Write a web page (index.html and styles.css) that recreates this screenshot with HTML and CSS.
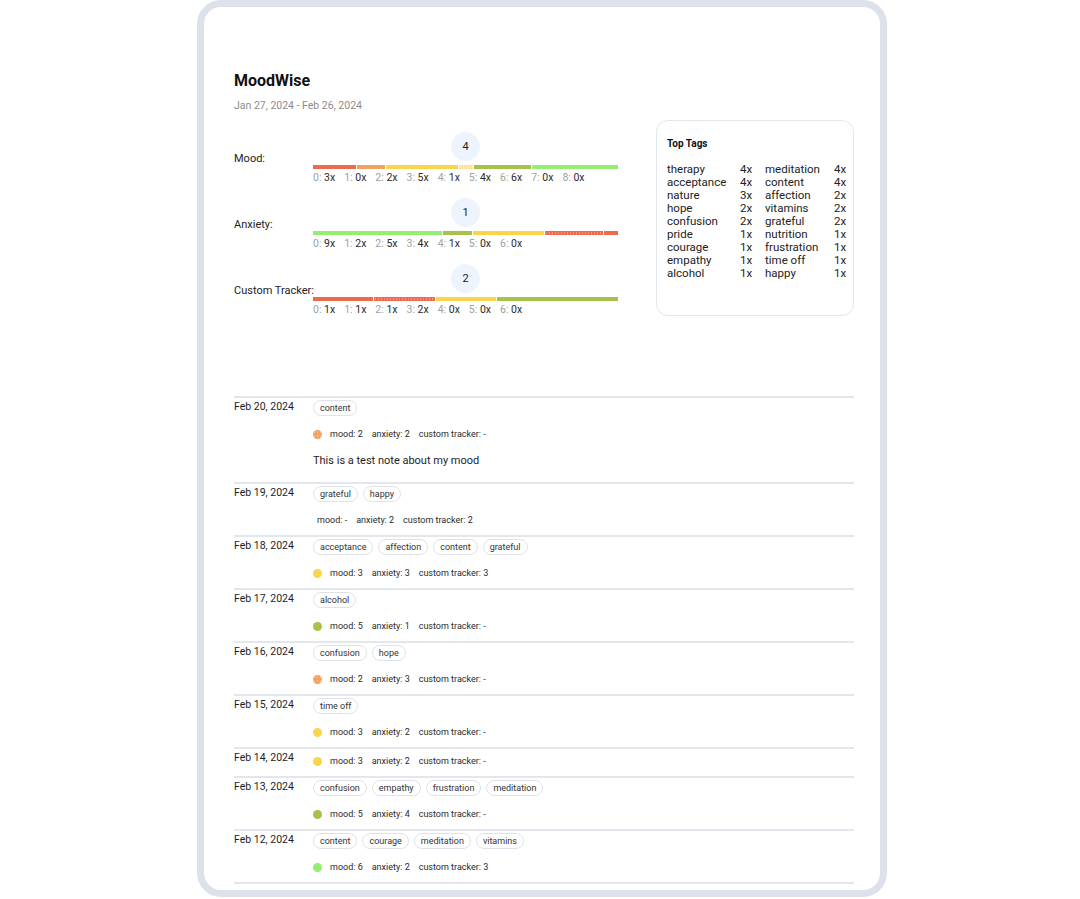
FILE: index.html
```html
<!DOCTYPE html>
<html lang="en">
<head>
    <meta charset="UTF-8">
    <meta name="viewport" content="width=device-width, initial-scale=1.0">
    <title>MoodWise</title>
    <link rel="stylesheet" href="styles.css">
</head>
<body>
    <div class="device">
        <h1 class="app-title">MoodWise</h1>
        <p class="range">Jan 27, 2024 - Feb 26, 2024</p>

        <section class="stats">
            <div class="trackers">
                <!-- Mood -->
                <div class="tracker">
                    <div class="tracker-label">Mood:</div>
                    <div class="tracker-body">
                        <div class="avg">4</div>
                        <div class="bar">
                            <span class="seg red" style="flex-grow: 3"></span>
                            <span class="seg orange" style="flex-grow: 2"></span>
                            <span class="seg yellow" style="flex-grow: 5"></span>
                            <span class="seg pale dots" style="flex-grow: 1"></span>
                            <span class="seg olive" style="flex-grow: 4"></span>
                            <span class="seg green" style="flex-grow: 6"></span>
                        </div>
                        <div class="counts">
                            <span><i>0:</i> 3x</span>
                            <span><i>1:</i> 0x</span>
                            <span><i>2:</i> 2x</span>
                            <span><i>3:</i> 5x</span>
                            <span><i>4:</i> 1x</span>
                            <span><i>5:</i> 4x</span>
                            <span><i>6:</i> 6x</span>
                            <span><i>7:</i> 0x</span>
                            <span><i>8:</i> 0x</span>
                        </div>
                    </div>
                </div>

                <!-- Anxiety -->
                <div class="tracker">
                    <div class="tracker-label">Anxiety:</div>
                    <div class="tracker-body">
                        <div class="avg">1</div>
                        <div class="bar">
                            <span class="seg green" style="flex-grow: 9"></span>
                            <span class="seg olive" style="flex-grow: 2"></span>
                            <span class="seg yellow" style="flex-grow: 5"></span>
                            <span class="seg red dots" style="flex-grow: 4"></span>
                            <span class="seg red" style="flex-grow: 1"></span>
                        </div>
                        <div class="counts">
                            <span><i>0:</i> 9x</span>
                            <span><i>1:</i> 2x</span>
                            <span><i>2:</i> 5x</span>
                            <span><i>3:</i> 4x</span>
                            <span><i>4:</i> 1x</span>
                            <span><i>5:</i> 0x</span>
                            <span><i>6:</i> 0x</span>
                        </div>
                    </div>
                </div>

                <!-- Custom tracker -->
                <div class="tracker">
                    <div class="tracker-label">Custom Tracker:</div>
                    <div class="tracker-body">
                        <div class="avg">2</div>
                        <div class="bar">
                            <span class="seg red" style="flex-grow: 1"></span>
                            <span class="seg red dots" style="flex-grow: 1"></span>
                            <span class="seg yellow" style="flex-grow: 1"></span>
                            <span class="seg olive" style="flex-grow: 2"></span>
                        </div>
                        <div class="counts">
                            <span><i>0:</i> 1x</span>
                            <span><i>1:</i> 1x</span>
                            <span><i>2:</i> 1x</span>
                            <span><i>3:</i> 2x</span>
                            <span><i>4:</i> 0x</span>
                            <span><i>5:</i> 0x</span>
                            <span><i>6:</i> 0x</span>
                        </div>
                    </div>
                </div>
            </div>

            <aside class="top-tags">
                <h3>Top Tags</h3>
                <div class="tag-grid">
                    <span>therapy</span><span>4x</span><span>meditation</span><span>4x</span>
                    <span>acceptance</span><span>4x</span><span>content</span><span>4x</span>
                    <span>nature</span><span>3x</span><span>affection</span><span>2x</span>
                    <span>hope</span><span>2x</span><span>vitamins</span><span>2x</span>
                    <span>confusion</span><span>2x</span><span>grateful</span><span>2x</span>
                    <span>pride</span><span>1x</span><span>nutrition</span><span>1x</span>
                    <span>courage</span><span>1x</span><span>frustration</span><span>1x</span>
                    <span>empathy</span><span>1x</span><span>time off</span><span>1x</span>
                    <span>alcohol</span><span>1x</span><span>happy</span><span>1x</span>
                </div>
            </aside>
        </section>

        <ul class="entries">
            <li class="entry">
                <div class="entry-date">Feb 20, 2024</div>
                <div class="entry-body">
                    <div class="tags"><span class="tag">content</span></div>
                    <div class="levels"><span class="dot orange dots"></span><span>mood: 2</span><span>anxiety: 2</span><span>custom tracker: -</span></div>
                    <p class="note">This is a test note about my mood</p>
                </div>
            </li>
            <li class="entry">
                <div class="entry-date">Feb 19, 2024</div>
                <div class="entry-body">
                    <div class="tags"><span class="tag">grateful</span><span class="tag">happy</span></div>
                    <div class="levels"><span>mood: -</span><span>anxiety: 2</span><span>custom tracker: 2</span></div>
                </div>
            </li>
            <li class="entry">
                <div class="entry-date">Feb 18, 2024</div>
                <div class="entry-body">
                    <div class="tags"><span class="tag">acceptance</span><span class="tag">affection</span><span class="tag">content</span><span class="tag">grateful</span></div>
                    <div class="levels"><span class="dot yellow"></span><span>mood: 3</span><span>anxiety: 3</span><span>custom tracker: 3</span></div>
                </div>
            </li>
            <li class="entry">
                <div class="entry-date">Feb 17, 2024</div>
                <div class="entry-body">
                    <div class="tags"><span class="tag">alcohol</span></div>
                    <div class="levels"><span class="dot olive"></span><span>mood: 5</span><span>anxiety: 1</span><span>custom tracker: -</span></div>
                </div>
            </li>
            <li class="entry">
                <div class="entry-date">Feb 16, 2024</div>
                <div class="entry-body">
                    <div class="tags"><span class="tag">confusion</span><span class="tag">hope</span></div>
                    <div class="levels"><span class="dot orange dots"></span><span>mood: 2</span><span>anxiety: 3</span><span>custom tracker: -</span></div>
                </div>
            </li>
            <li class="entry">
                <div class="entry-date">Feb 15, 2024</div>
                <div class="entry-body">
                    <div class="tags"><span class="tag">time off</span></div>
                    <div class="levels"><span class="dot yellow"></span><span>mood: 3</span><span>anxiety: 2</span><span>custom tracker: -</span></div>
                </div>
            </li>
            <li class="entry">
                <div class="entry-date">Feb 14, 2024</div>
                <div class="entry-body">
                    <div class="levels"><span class="dot yellow"></span><span>mood: 3</span><span>anxiety: 2</span><span>custom tracker: -</span></div>
                </div>
            </li>
            <li class="entry">
                <div class="entry-date">Feb 13, 2024</div>
                <div class="entry-body">
                    <div class="tags"><span class="tag">confusion</span><span class="tag">empathy</span><span class="tag">frustration</span><span class="tag">meditation</span></div>
                    <div class="levels"><span class="dot olive"></span><span>mood: 5</span><span>anxiety: 4</span><span>custom tracker: -</span></div>
                </div>
            </li>
            <li class="entry">
                <div class="entry-date">Feb 12, 2024</div>
                <div class="entry-body">
                    <div class="tags"><span class="tag">content</span><span class="tag">courage</span><span class="tag">meditation</span><span class="tag">vitamins</span></div>
                    <div class="levels"><span class="dot green"></span><span>mood: 6</span><span>anxiety: 2</span><span>custom tracker: 3</span></div>
                </div>
            </li>
        </ul>
    </div>
</body>
</html>
```

FILE: styles.css
```css
body {
    margin: 0;
    background-color: #ffffff;
    font-family: Roboto, "Liberation Sans", Arial, sans-serif;
    color: #1d1d1f;
}

/* phone-like frame around the app */
.device {
    box-sizing: border-box;
    width: 690px;
    height: 897px;
    margin-left: 197px;
    padding: 64px 26px 0 30px;
    border: 7px solid #dde2ea;
    border-radius: 24px;
    overflow: hidden;
    background-color: #ffffff;
}

.app-title {
    margin: 0;
    font-size: 16px;
    line-height: 20px;
    font-weight: 700;
    color: #111;
}

.range {
    margin: 8px 0 0;
    font-size: 10.5px;
    line-height: 14px;
    color: #8c8c8c;
}

/* summary: tracker bars + top tags card */
.stats {
    display: flex;
    gap: 38px;
    margin-top: 7px;
}

.trackers {
    width: 384px;
    padding-top: 12px;
    display: flex;
    flex-direction: column;
    gap: 13px;
}

.tracker {
    display: flex;
    align-items: center;
}

.tracker-label {
    width: 79px;
    flex-shrink: 0;
    font-size: 11px;
    line-height: 14px;
    white-space: nowrap;
    color: #222;
}

.tracker-body {
    width: 305px;
}

.avg {
    width: 29px;
    height: 29px;
    margin: 0 auto;
    border-radius: 50%;
    background-color: #edf4fd;
    display: grid;
    place-items: center;
    font-size: 11px;
    color: #222;
}

.bar {
    display: flex;
    gap: 1px;
    height: 4px;
    margin-top: 4px;
}

.seg {
    flex-basis: 0;
}

.counts {
    display: flex;
    gap: 9px;
    margin-top: 2px;
    font-size: 10.5px;
    line-height: 14px;
    color: #2a2a2a;
}

.counts i {
    font-style: normal;
    color: #a0a0a0;
}

/* scale colours */
.red { background-color: #ee6a4d; }
.orange { background-color: #f3a15e; }
.yellow { background-color: #fad44b; }
.pale { background-color: #fbe39a; }
.olive { background-color: #a6c24b; }
.green { background-color: #93ee72; }

.dots {
    background-image: radial-gradient(rgba(255, 255, 255, 0.3) 0.5px, transparent 0.9px);
    background-size: 3px 4px;
    background-position: 0 0;
}

.top-tags {
    box-sizing: border-box;
    width: 198px;
    height: 196px;
    padding: 16px 9px 0 10px;
    border: 1px solid #e3e6eb;
    border-radius: 12px;
}

.top-tags h3 {
    margin: 0;
    font-size: 10px;
    line-height: 14px;
    font-weight: 700;
    color: #111;
}

.tag-grid {
    display: grid;
    grid-template-columns: 73px 25px 69px auto;
    margin-top: 12px;
    font-size: 11.5px;
    line-height: 13px;
    color: #222;
}

/* journal entries */
.entries {
    list-style: none;
    margin: 79px 0 0;
    padding: 0;
}

.entry {
    display: flex;
    padding: 2px 0 9px;
    border-top: 2px solid #e3e7ed;
}

.entry:last-child {
    border-bottom: 2px solid #e3e7ed;
}

.entry-date {
    width: 79px;
    flex-shrink: 0;
    font-size: 10.5px;
    line-height: 14px;
    color: #1d1d1f;
}

.tags {
    display: flex;
    gap: 5px;
    margin-bottom: 12px;
}

.tag {
    padding: 1px 6px;
    border: 1px solid #dfe3e9;
    border-radius: 9px;
    font-size: 9px;
    line-height: 12px;
    color: #333;
}

.levels {
    display: flex;
    align-items: center;
    margin-top: 4px;
    font-size: 9px;
    line-height: 12px;
    color: #2a2a2a;
}

.levels span {
    margin: 0 5px 0 4px;
}

.levels .dot {
    width: 9px;
    height: 9px;
    margin: 0 4px 0 0;
    border-radius: 50%;
}

.note {
    margin: 14px 0 5px;
    font-size: 11px;
    line-height: 14px;
    color: #1d1d1f;
}
```
